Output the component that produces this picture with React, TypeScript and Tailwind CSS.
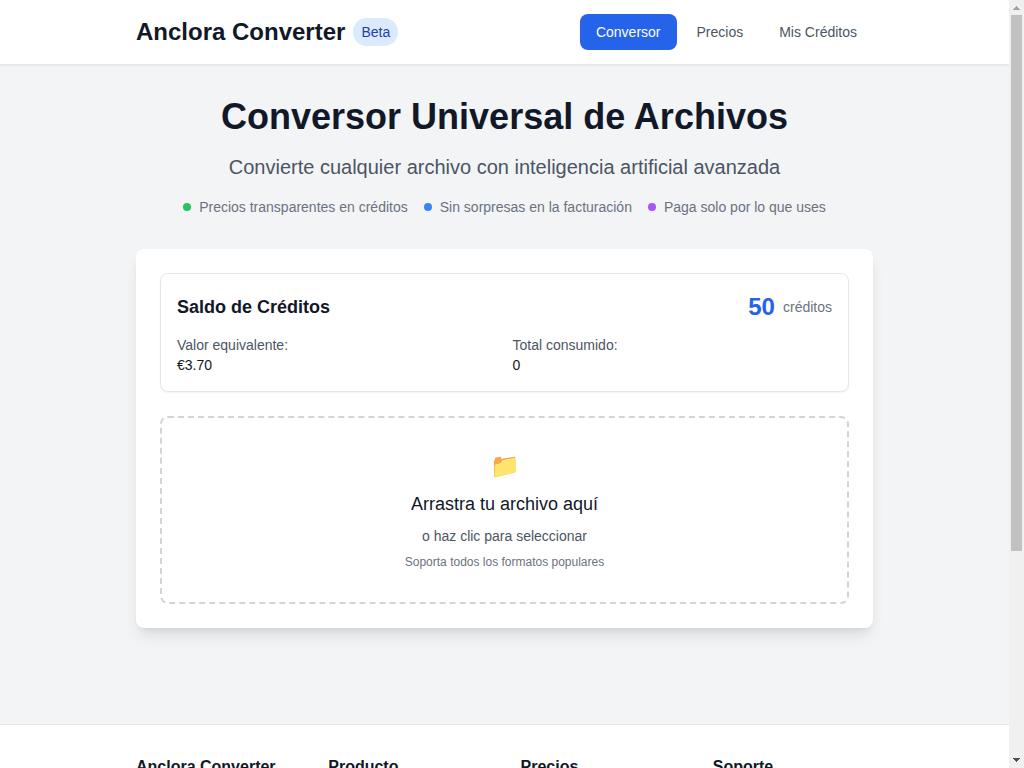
import { useRef } from 'react';

const navItems = ['Precios', 'Mis Créditos'];

const highlights = [
  { label: 'Precios transparentes en créditos', dot: 'bg-[#22c55e]' },
  { label: 'Sin sorpresas en la facturación', dot: 'bg-[#3b82f6]' },
  { label: 'Paga solo por lo que uses', dot: 'bg-[#a855f7]' },
];

const footerSections = ['Anclora Converter', 'Producto', 'Precios', 'Soporte'];

function Header() {
  return (
    <header className="border-b border-[#e5e7eb] bg-white shadow-[0_1px_2px_rgba(0,0,0,0.05)]">
      <div className="mx-auto flex h-16 max-w-[769px] items-center justify-between px-4">
        <div className="flex items-center gap-2">
          <span className="text-2xl font-bold text-[#111827]">Anclora Converter</span>
          <span className="rounded-full bg-[#dbeafe] px-2 py-1 text-sm text-[#1e40af]">Beta</span>
        </div>
        <nav className="flex gap-1 text-sm">
          <button type="button" className="rounded-lg bg-[#2563eb] px-4 py-2 text-white">
            Conversor
          </button>
          {navItems.map((item) => (
            <button key={item} type="button" className="rounded-lg px-4 py-2 text-[#4b5563]">
              {item}
            </button>
          ))}
        </nav>
      </div>
    </header>
  );
}

function Balance() {
  return (
    <section className="rounded-lg border border-[#e5e7eb] bg-white p-4 shadow-[0_1px_2px_rgba(0,0,0,0.05)]">
      <div className="mb-3 flex h-[33px] items-center justify-between">
        <h2 className="text-lg font-semibold text-[#111827]">Saldo de Créditos</h2>
        <div className="flex items-center gap-2">
          <span className="text-2xl font-bold text-[#2563eb]">50</span>
          <span className="text-sm text-[#6b7280]">créditos</span>
        </div>
      </div>
      <dl className="grid grid-cols-2 gap-4 text-sm">
        <div>
          <dt className="text-[#4b5563]">Valor equivalente:</dt>
          <dd className="text-[#111827]">€3.70</dd>
        </div>
        <div>
          <dt className="text-[#4b5563]">Total consumido:</dt>
          <dd className="text-[#111827]">0</dd>
        </div>
      </dl>
    </section>
  );
}

function DropZone() {
  const input = useRef<HTMLInputElement>(null);
  return (
    <>
      <button
        type="button"
        onClick={() => input.current?.click()}
        className="mt-6 block w-full rounded-lg border-2 border-dashed border-[#d1d5db] p-8 text-center"
      >
        <span className="mb-2 block text-2xl">📁</span>
        <span className="mb-2 block text-lg text-[#111827]">Arrastra tu archivo aquí</span>
        <span className="mb-2 block text-sm text-[#4b5563]">o haz clic para seleccionar</span>
        <span className="block text-xs text-[#6b7280]">Soporta todos los formatos populares</span>
      </button>
      <input ref={input} type="file" aria-label="Archivo" className="hidden" />
    </>
  );
}

function Scrollbar() {
  return (
    <div aria-hidden="true" className="flex w-[15px] shrink-0 flex-col items-center bg-[#f0f0f0]">
      <svg width="15" height="15" viewBox="0 0 15 15" shapeRendering="crispEdges">
        <path d="M7 6h1v1h1v1h1v1h1v1H4V9h1V8h1V7h1z" fill="#a3a3a3" />
      </svg>
      <div className="w-[11px] grow-[536] bg-[#c1c1c1]" />
      <div className="grow-[202]" />
      <svg width="15" height="15" viewBox="0 0 15 15" shapeRendering="crispEdges">
        <path d="M4 5h7v1h-1v1H9v1H8v1H7V8H6V7H5V6H4z" fill="#505050" />
      </svg>
    </div>
  );
}

export default function App() {
  return (
    <div className="flex h-screen overflow-hidden font-['Liberation_Sans',Arial,sans-serif]">
      <div className="min-w-0 flex-1 overflow-hidden bg-[#f3f4f6]">
        <Header />
        <main className="mx-auto max-w-[769px] px-4 pt-8 pb-24">
          <div className="mb-8 text-center">
            <h1 className="mb-4 text-4xl font-bold text-[#111827]">Conversor Universal de Archivos</h1>
            <p className="mb-4 text-xl text-[#4b5563]">
              Convierte cualquier archivo con inteligencia artificial avanzada
            </p>
            <ul className="flex justify-center gap-4 text-sm text-[#6b7280]">
              {highlights.map(({ label, dot }) => (
                <li key={label} className="flex items-center gap-2">
                  <span className={`size-2 rounded-full ${dot}`} />
                  {label}
                </li>
              ))}
            </ul>
          </div>
          <div className="rounded-lg bg-white p-6 shadow-lg">
            <Balance />
            <DropZone />
          </div>
        </main>
        <footer className="border-t border-[#e5e7eb] bg-white">
          <div className="mx-auto grid max-w-[769px] grid-cols-4 gap-8 px-4 py-8">
            {footerSections.map((title) => (
              <h3 key={title} className="leading-5 font-semibold whitespace-nowrap text-[#111827]">
                {title}
              </h3>
            ))}
          </div>
        </footer>
      </div>
      <Scrollbar />
    </div>
  );
}
